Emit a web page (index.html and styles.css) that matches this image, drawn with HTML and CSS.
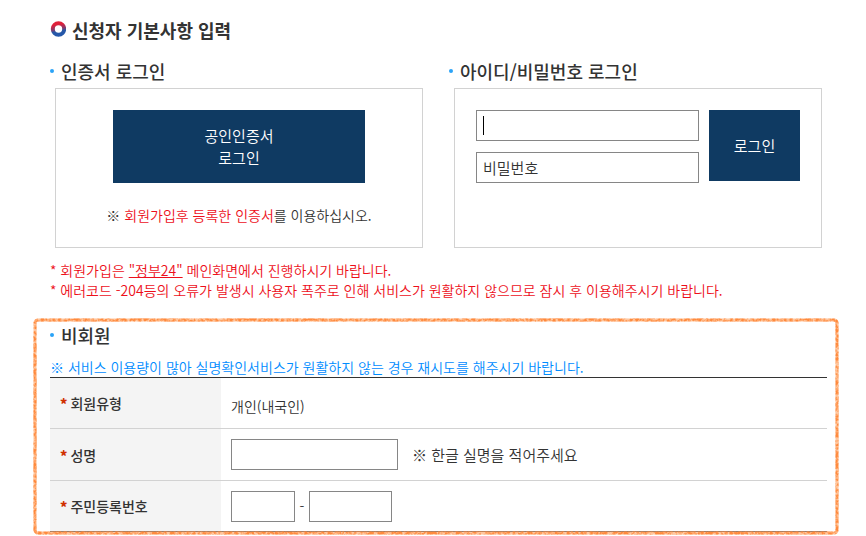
FILE: index.html
```html
<!DOCTYPE html>
<html lang="ko">
<head>
    <meta charset="UTF-8">
    <meta name="viewport" content="width=device-width, initial-scale=1.0">
    <title>신청자 기본사항 입력</title>
    <link rel="stylesheet" href="styles.css">
</head>
<body>

<div class="container">
    <h1 class="page-title">
        <svg class="title-icon" width="16" height="16" viewBox="0 0 16 16" aria-hidden="true">
            <defs>
                <linearGradient id="ring" x1="0.4" y1="0" x2="0.6" y2="1">
                    <stop offset="0.1" stop-color="#e0203a"/>
                    <stop offset="0.5" stop-color="#843a6c"/>
                    <stop offset="0.7" stop-color="#2857a5"/>
                    <stop offset="1" stop-color="#2458ab"/>
                </linearGradient>
            </defs>
            <circle cx="8.5" cy="8" r="5.7" fill="none" stroke="url(#ring)" stroke-width="4"/>
        </svg>
        신청자 기본사항 입력
    </h1>

    <div class="login-row">
        <div class="login-col">
            <h2 class="sub-title">인증서 로그인</h2>
            <div class="login-box cert-box">
                <button type="button" class="btn btn-cert">공인인증서<br>로그인</button>
                <p class="cert-text">※ <span class="red">회원가입후 등록한 인증서</span>를 이용하십시오.</p>
            </div>
        </div>
        <div class="login-col">
            <h2 class="sub-title">아이디/비밀번호 로그인</h2>
            <form class="login-box id-box">
                <div class="id-fields">
                    <div class="id-field">
                        <input type="text" id="user-id" class="text-input" aria-label="아이디">
                    </div>
                    <input type="password" id="user-pw" class="text-input" placeholder="비밀번호" aria-label="비밀번호">
                </div>
                <button type="button" class="btn btn-login">로그인</button>
            </form>
        </div>
    </div>

    <div class="notice">
        <p>* 회원가입은 <a href="#">"정부24"</a> 메인화면에서 진행하시기 바랍니다.</p>
        <p>* 에러코드 -204등의 오류가 발생시 사용자 폭주로 인해 서비스가 원활하지 않으므로 잠시 후 이용해주시기 바랍니다.</p>
    </div>

    <div class="guest">
        <h2 class="sub-title">비회원</h2>
        <p class="guest-text">※ 서비스 이용량이 많아 실명확인서비스가 원활하지 않는 경우 재시도를 해주시기 바랍니다.</p>
        <table class="guest-table">
            <tr>
                <th scope="row"><span class="star">*</span>회원유형</th>
                <td class="value">개인(내국인)</td>
            </tr>
            <tr>
                <th scope="row"><span class="star">*</span><label for="guest-name">성명</label></th>
                <td>
                    <div class="cell">
                        <input type="text" id="guest-name" class="text-input name-input">
                        <span class="hint">※ 한글 실명을 적어주세요</span>
                    </div>
                </td>
            </tr>
            <tr>
                <th scope="row"><span class="star">*</span><label for="jumin1">주민등록번호</label></th>
                <td>
                    <div class="cell">
                        <input type="text" id="jumin1" class="text-input jumin1" maxlength="6">
                        <span class="dash">-</span>
                        <input type="password" id="jumin2" class="text-input jumin2" maxlength="7" aria-label="주민등록번호 뒷자리">
                    </div>
                </td>
            </tr>
        </table>

        <!-- crayon frame -->
        <svg class="crayon" aria-hidden="true">
            <filter id="rough" filterUnits="userSpaceOnUse" x="0" y="0" width="100%" height="100%">
                <feTurbulence type="fractalNoise" baseFrequency="0.35" numOctaves="2" seed="4" result="noise"/>
                <feColorMatrix in="noise" type="matrix" values="0 0 0 0 0  0 0 0 0 0  0 0 0 0 0  3 0 0 0 -0.9" result="grain"/>
                <feDisplacementMap in="SourceGraphic" in2="noise" scale="1" result="edge"/>
                <feComposite in="edge" in2="grain" operator="in"/>
            </filter>
            <rect class="crayon-base" rx="3"/>
            <rect class="crayon-line" rx="3" filter="url(#rough)"/>
        </svg>
    </div>
</div>

</body>
</html>
```
FILE: styles.css
```css
* {
    box-sizing: border-box;
}
body {
    margin: 0;
    background: #fff;
    color: #333;
    font-family: "Noto Sans CJK KR", sans-serif;
    font-size: 15px;
    font-weight: 350;
    line-height: 22px;
}
h1, h2, p {
    margin: 0;
}
.container {
    padding: 18px 39px 0 50px;
}
.page-title {
    display: flex;
    align-items: center;
    gap: 6px;
    font-size: 18px;
    font-weight: 700;
    line-height: 24px;
}
.title-icon {
    margin-bottom: 2px;
}
.sub-title {
    display: flex;
    align-items: center;
    gap: 7px;
    font-size: 18px;
    font-weight: 500;
    line-height: 24px;
}
.sub-title::before {
    content: "";
    width: 4px;
    height: 4px;
    border-radius: 50%;
    background: #2ba3f7;
}
.login-row {
    display: grid;
    grid-template-columns: 1fr 1fr;
    gap: 21px;
    margin-top: 17px;
}
.login-box {
    min-height: 160px;
    margin: 5px 5px 0;
    padding: 21px;
    border: 1px solid #d2d2d2;
}
.cert-box {
    padding-bottom: 20px;
    text-align: center;
}
.btn {
    border: 0;
    background: #0f3a62;
    color: #fff;
    font: inherit;
    cursor: pointer;
}
.btn-cert {
    width: 252px;
    height: 73px;
}
.cert-text {
    margin-top: 21px;
    font-size: 14px;
}
.red {
    color: #ed0f1a;
}
.id-box {
    display: flex;
    align-items: flex-start;
    gap: 10px;
}
.id-fields {
    flex: 1;
    display: grid;
    gap: 11px;
}
.id-field {
    position: relative;
}
.id-field:not(:focus-within)::after {
    content: "";
    position: absolute;
    top: 6px;
    left: 7px;
    width: 1px;
    height: 19px;
    background: #000;
}
.text-input {
    display: block;
    width: 100%;
    height: 31px;
    padding: 0 6px;
    border: 1px solid #868686;
    border-radius: 0;
    background: #fff;
    color: #333;
    font: inherit;
}
.text-input::placeholder {
    color: #333;
    opacity: 1;
}
.btn-login {
    width: 91px;
    height: 71px;
}
.notice {
    margin-top: 12px;
    color: #ed0f1a;
    font-size: 14px;
    line-height: 20px;
}
.notice a {
    color: inherit;
}
.guest {
    position: relative;
    margin: 18px -12px 0 -17px;
    padding: 5px 12px 3px 17px;
}
.guest-text {
    margin-top: 11px;
    padding-bottom: 1px;
    color: #008cff;
    font-size: 14px;
    line-height: 18px;
}
.guest-table {
    width: 100%;
    border-collapse: collapse;
    border-top: 1px solid #333;
    border-bottom: 1px solid #333;
    font-size: 14px;
}
.guest-table tr + tr {
    border-top: 1px solid #d2d2d2;
}
.guest-table th {
    width: 171px;
    height: 51px;
    padding: 0 10px;
    background: #f4f4f4;
    font-weight: 500;
    text-align: left;
}
.guest-table tr:nth-child(2) th {
    height: 52px;
}
.guest-table td {
    padding: 0 10px;
}
.guest-table .value {
    padding-top: 5px;
}
.star {
    margin-right: 3px;
    color: #d03000;
    font-weight: 900;
}
.cell {
    display: flex;
    align-items: center;
}
.name-input {
    width: 167px;
}
.hint {
    margin-left: 14px;
    font-size: 15px;
}
.jumin1 {
    width: 64px;
}
.jumin2 {
    width: 83px;
}
.dash {
    width: 14px;
    text-align: center;
}
.crayon {
    position: absolute;
    top: 0;
    left: 0;
    width: 100%;
    height: 100%;
    pointer-events: none;
}
.crayon rect {
    x: 2px;
    y: 2px;
    width: calc(100% - 4px);
    height: calc(100% - 4px);
    fill: none;
}
.crayon-base {
    stroke: #ffc79f;
    stroke-width: 3px;
}
.crayon-line {
    stroke: #ff8a3c;
    stroke-width: 3px;
}
```
